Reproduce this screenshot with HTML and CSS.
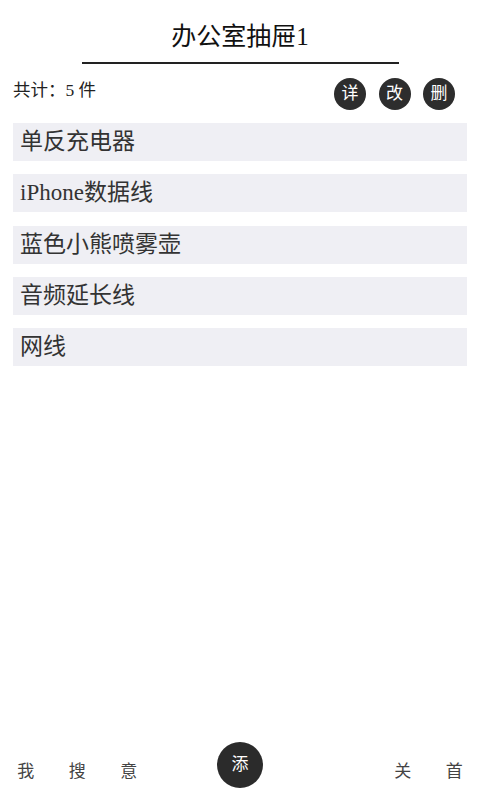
FILE: index.html
```html
<html>
  <head>
    <meta charset="utf-8">
    <link rel="stylesheet" href="styles.css">
  </head>
  <body>
    <div class="page">
      <div class="header">
        <h1 class="title">办公室抽屉1</h1>
      </div>

      <div class="toolbar">
        <span class="count">共计：5 件</span>
        <div class="actions">
          <button class="round">详</button>
          <button class="round">改</button>
          <button class="round">删</button>
        </div>
      </div>

      <ul class="items">
        <li class="item">单反充电器</li>
        <li class="item">iPhone数据线</li>
        <li class="item">蓝色小熊喷雾壶</li>
        <li class="item">音频延长线</li>
        <li class="item">网线</li>
      </ul>

      <div class="footer">
        <div class="nav nav-left">
          <span class="nav-item">我</span>
          <span class="nav-item">搜</span>
          <span class="nav-item">意</span>
        </div>
        <button class="add">添</button>
        <div class="nav nav-right">
          <span class="nav-item">关</span>
          <span class="nav-item">首</span>
        </div>
      </div>
    </div>
  </body>
</html>
```

FILE: styles.css
```css
body {
  margin: 0;
  background: white;
  font-family: "Liberation Serif", "Noto Sans CJK SC", serif;
  color: #333;
}

.page {
  display: flex;
  flex-direction: column;
  height: 100vh;
}

.header {
  padding-top: 19px;
}

.title {
  width: 317px;
  margin: 0 auto;
  padding-bottom: 7px;
  border-bottom: 2px solid #222;
  text-align: center;
  font-size: 25px;
  line-height: 36px;
  font-weight: normal;
  color: #111;
}

.toolbar {
  display: flex;
  justify-content: space-between;
  align-items: flex-start;
  margin-top: 14px;
  padding: 0 25px 0 13px;
}

.count {
  font-size: 17.5px;
  line-height: 24px;
  color: #222;
}

.actions {
  display: flex;
  gap: 12.5px;
}

button {
  border: none;
  outline: none;
  padding: 0;
  font-family: "Liberation Serif", "Noto Sans CJK SC", serif;
  cursor: pointer;
}

.round {
  width: 32px;
  height: 32px;
  border-radius: 50%;
  background: #2d2d2d;
  color: white;
  font-size: 17px;
  line-height: 32px;
}

.items {
  list-style: none;
  margin: 13px 0 0 0;
  padding: 0 13px;
  display: flex;
  flex-direction: column;
  gap: 13.3px;
  flex: 1;
}

.item {
  height: 38px;
  padding-left: 7px;
  background: #efeff4;
  font-size: 23px;
  line-height: 38px;
  color: #333;
}

.footer {
  display: grid;
  grid-template-columns: 1fr 46px 1fr;
  align-items: end;
  padding-bottom: 12px;
}

.nav {
  display: flex;
  margin-bottom: 4px;
}

.nav-right {
  justify-content: flex-end;
}

.nav-item {
  width: 51.5px;
  text-align: center;
  font-size: 17px;
  line-height: 24px;
  color: #444;
}

.add {
  width: 46px;
  height: 46px;
  border-radius: 50%;
  background: #2b2b2b;
  color: white;
  font-size: 17px;
  line-height: 46px;
}
```
